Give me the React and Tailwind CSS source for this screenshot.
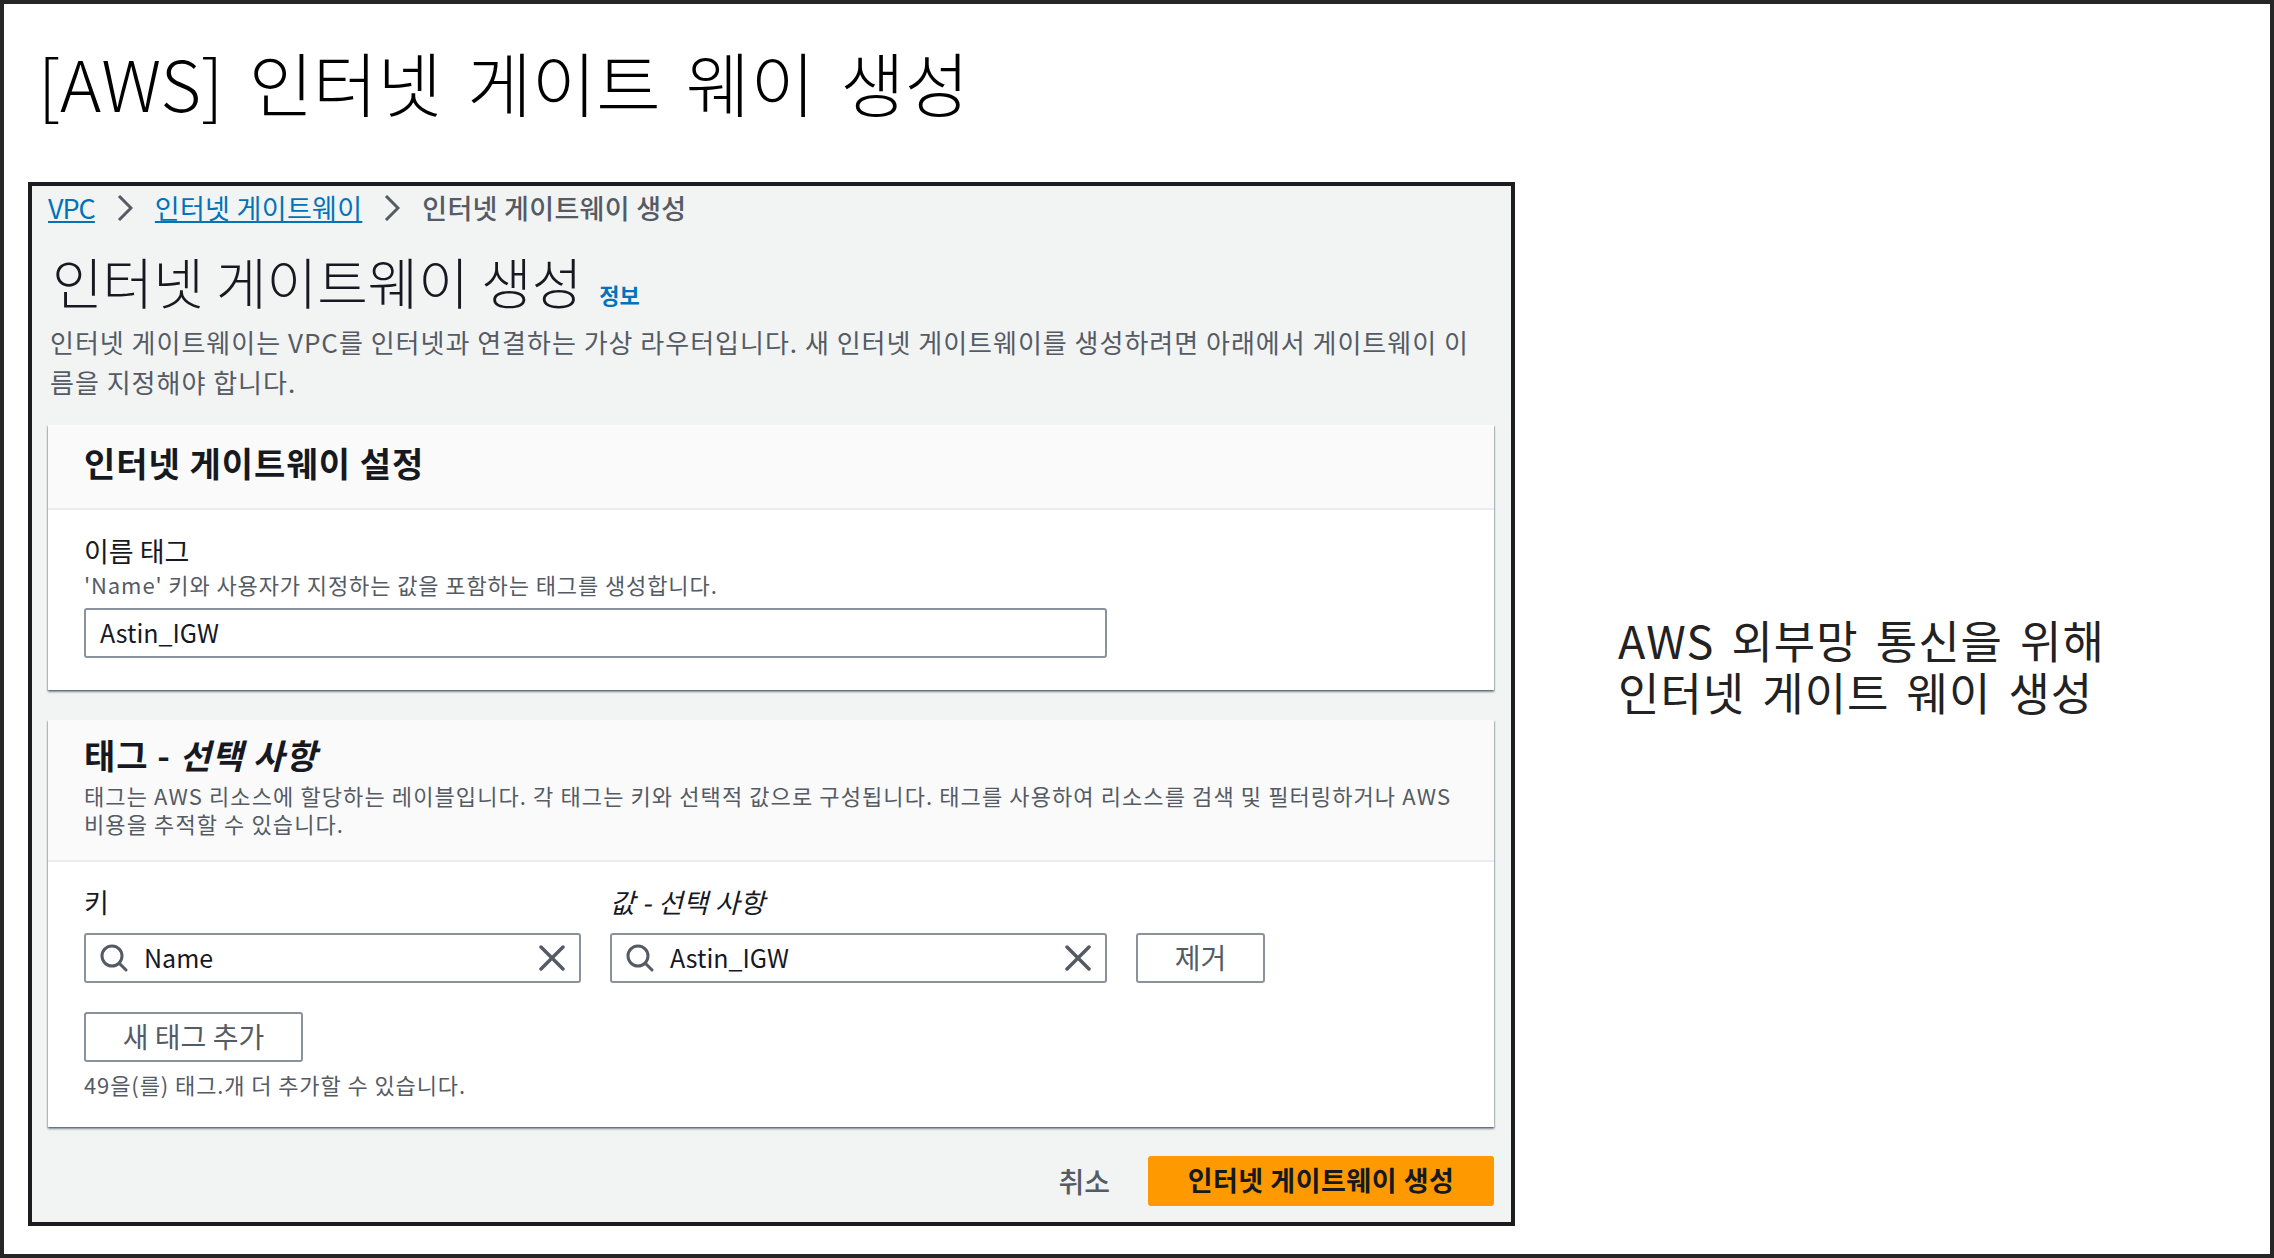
const font = { fontFamily: '"Noto Sans CJK KR", "Noto Sans", sans-serif' };

function SearchIcon() {
  return (
    <svg viewBox="0 0 28 28" className="w-[28px] h-[28px] shrink-0" fill="none" stroke="#545b64" strokeWidth="3" strokeLinecap="round">
      <circle cx="12" cy="12" r="10" />
      <path d="M19.5 19.5L26 26" />
    </svg>
  );
}

function ClearIcon() {
  return (
    <svg viewBox="0 0 26 26" className="w-[26px] h-[26px] shrink-0" fill="none" stroke="#545b64" strokeWidth="3.5" strokeLinecap="round">
      <path d="M2 2L24 24M24 2L2 24" />
    </svg>
  );
}

function Crumb() {
  return (
    <svg viewBox="0 0 16 26" className="w-[16px] h-[26px] mx-[22px] shrink-0" fill="none" stroke="#545b64" strokeWidth="3">
      <path d="M2 1L14 13L2 25" />
    </svg>
  );
}

function TagField({ value }) {
  return (
    <div className="flex items-center w-[497px] h-[50px] bg-white border-2 border-[#8a929c] rounded-[3px] pl-[14px] pr-[14px]">
      <SearchIcon />
      <span className="ml-[16px] text-[25px] text-[#16191f] flex-1">{value}</span>
      <ClearIcon />
    </div>
  );
}

export default function App() {
  return (
    <div style={font} className="w-[2274px] h-[1258px] bg-white border-x-4 border-y-4 border-[#262626] overflow-hidden flex flex-col">
      <h1 className="h-[178px] pl-[34px] pt-[33px] text-[70px] [word-spacing:10px] font-light text-[#000] leading-[90px] whitespace-pre">[AWS] 인터넷 게이트 웨이 생성</h1>
      <div className="flex items-start">
        <section className="ml-[24px] w-[1487px] h-[1044px] border-[4px] border-[#1d1d1f] bg-[#f2f3f3] px-[16px] flex flex-col shrink-0">
          <nav className="flex items-center h-[44px] text-[27px] tracking-[0.3px]">
            <span className="text-[#0073bb] underline tracking-[-1px]">VPC</span>
            <Crumb />
            <span className="text-[#0073bb] underline">인터넷 게이트웨이</span>
            <Crumb />
            <span className="text-[#545b64] font-medium">인터넷 게이트웨이 생성</span>
          </nav>
          <div className="flex items-end mt-[16px] h-[68px] pl-[4px]">
            <span className="text-[55px] font-light text-[#16191f] leading-[68px]">인터넷 게이트웨이 생성</span>
            <span className="ml-[17px] mb-[6px] text-[22px] font-bold text-[#0073bb] leading-[28px]">정보</span>
          </div>
          <p className="mt-[8px] pl-[2px] text-[26px] leading-[40px] text-[#545b64] w-[1440px] h-[103px] tracking-[1px]">
            인터넷 게이트웨이는 VPC를 인터넷과 연결하는 가상 라우터입니다. 새 인터넷 게이트웨이를 생성하려면 아래에서 게이트웨이 이름을 지정해야 합니다.
          </p>
          <div className="bg-white shadow-[0_2px_2px_rgba(0,28,36,0.45),1px_1px_1px_rgba(0,28,36,0.15),-1px_1px_1px_rgba(0,28,36,0.15)] w-[1446px] h-[265px] shrink-0">
            <div className="h-[85px] bg-[#fafafa] border-b-2 border-[#eaeded] pl-[36px] pb-[8px] flex items-center">
              <h2 className="text-[34px] font-bold text-[#16191f] tracking-[1px]">인터넷 게이트웨이 설정</h2>
            </div>
            <div className="pl-[36px] pt-[23px]">
              <div className="text-[27px] leading-[36px] text-[#16191f]">이름 태그</div>
              <div className="text-[22px] leading-[28px] text-[#545b64] mt-[1px] tracking-[0.9px]">'Name' 키와 사용자가 지정하는 값을 포함하는 태그를 생성합니다.</div>
              <div className="w-[1023px] h-[50px] mt-[10px] border-2 border-[#8a929c] rounded-[3px] flex items-center pl-[14px] text-[25px] text-[#16191f]">Astin_IGW</div>
            </div>
          </div>
          <div className="mt-[30px] bg-white shadow-[0_2px_2px_rgba(0,28,36,0.45),1px_1px_1px_rgba(0,28,36,0.15),-1px_1px_1px_rgba(0,28,36,0.15)] w-[1446px] h-[407px] shrink-0">
            <div className="h-[142px] bg-[#fafafa] border-b-2 border-[#eaeded] pl-[36px] pt-[13px]">
              <h2 className="text-[34px] leading-[44px] font-bold text-[#16191f] tracking-[1px]">태그 - <i>선택 사항</i></h2>
              <p className="text-[22px] leading-[28px] text-[#545b64] w-[1375px] mt-[4px] tracking-[1.1px]">
                태그는 AWS 리소스에 할당하는 레이블입니다. 각 태그는 키와 선택적 값으로 구성됩니다. 태그를 사용하여 리소스를 검색 및 필터링하거나 AWS 비용을 추적할 수 있습니다.
              </p>
            </div>
            <div className="pl-[36px] pt-[22px]">
              <div className="flex gap-[29px] h-[36px] text-[27px] leading-[36px] text-[#16191f]">
                <span className="w-[497px]">키</span>
                <span className="italic tracking-[0.4px]">값 - 선택 사항</span>
              </div>
              <div className="flex items-center gap-[29px] mt-[13px]">
                <TagField value="Name" />
                <TagField value="Astin_IGW" />
                <div className="w-[129px] h-[50px] border-2 border-[#8a929c] rounded-[3px] flex items-center justify-center text-[28px] text-[#545b64] pb-[3px]">제거</div>
              </div>
              <div className="w-[219px] h-[50px] mt-[29px] border-2 border-[#8a929c] rounded-[3px] flex items-center justify-center text-[28px] text-[#545b64] pb-[3px]">새 태그 추가</div>
              <div className="text-[22px] leading-[28px] text-[#545b64] mt-[8px] tracking-[0.9px]">49을(를) 태그.개 더 추가할 수 있습니다.</div>
            </div>
          </div>
          <div className="flex items-center justify-end mt-[29px] w-[1446px]">
            <span className="text-[28px] font-medium text-[#545b64] mr-[38px]">취소</span>
            <div className="w-[346px] h-[50px] bg-[#ff9900] rounded-[3px] flex items-center justify-center text-[27px] tracking-[0.5px] font-bold text-[#16191f] pb-[2px]">인터넷 게이트웨이 생성</div>
          </div>
        </section>
        <div className="ml-[103px] mt-[432px] text-[45px] leading-[52px] tracking-[1px] [word-spacing:6px] text-[#222] whitespace-pre">
          <div>AWS 외부망 통신을 위해</div>
          <div>인터넷 게이트 웨이 생성</div>
        </div>
      </div>
    </div>
  );
}
